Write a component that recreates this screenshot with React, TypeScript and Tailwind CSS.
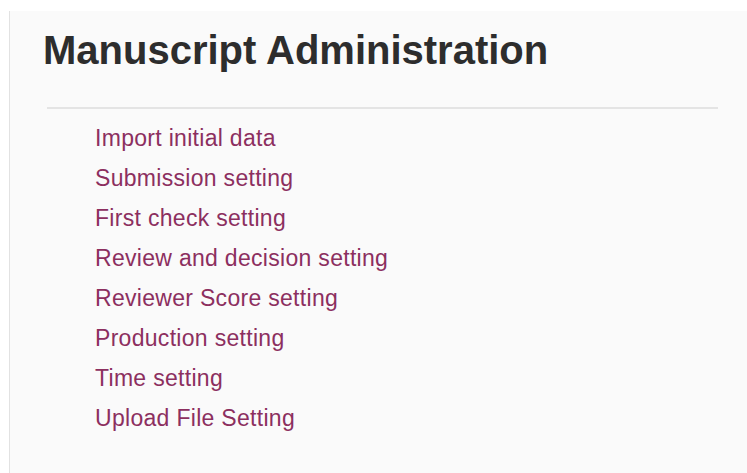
import React from "react";

const links = [
    "Import initial data",
    "Submission setting",
    "First check setting",
    "Review and decision setting",
    "Reviewer Score setting",
    "Production setting",
    "Time setting",
    "Upload File Setting",
];

export default function App() {
    return (
        <div
            className="min-h-screen bg-white pt-[11px] pl-[9px]"
            style={{ fontFamily: '"Liberation Sans", Arial, sans-serif' }}
        >
            <div className="min-h-[462px] border-l border-[#e2e2e2] bg-[#fafafa] pl-[33px] pr-[29px]">
                <h1 className="pt-[19px] text-[40px] font-bold leading-[40px] text-[#2d2d2d]">
                    Manuscript Administration
                </h1>

                <div className="mt-[37px] ml-[4px] h-[2px] bg-[#e4e4e4]" />

                <ul className="mt-[9px] pl-[52px]">
                    {links.map((label) => (
                        <li key={label} className="text-[23px] leading-[40px] tracking-[0.3px]">
                            <a href="#" className="text-[#8c2f5f] hover:underline">
                                {label}
                            </a>
                        </li>
                    ))}
                </ul>
            </div>
        </div>
    );
}
